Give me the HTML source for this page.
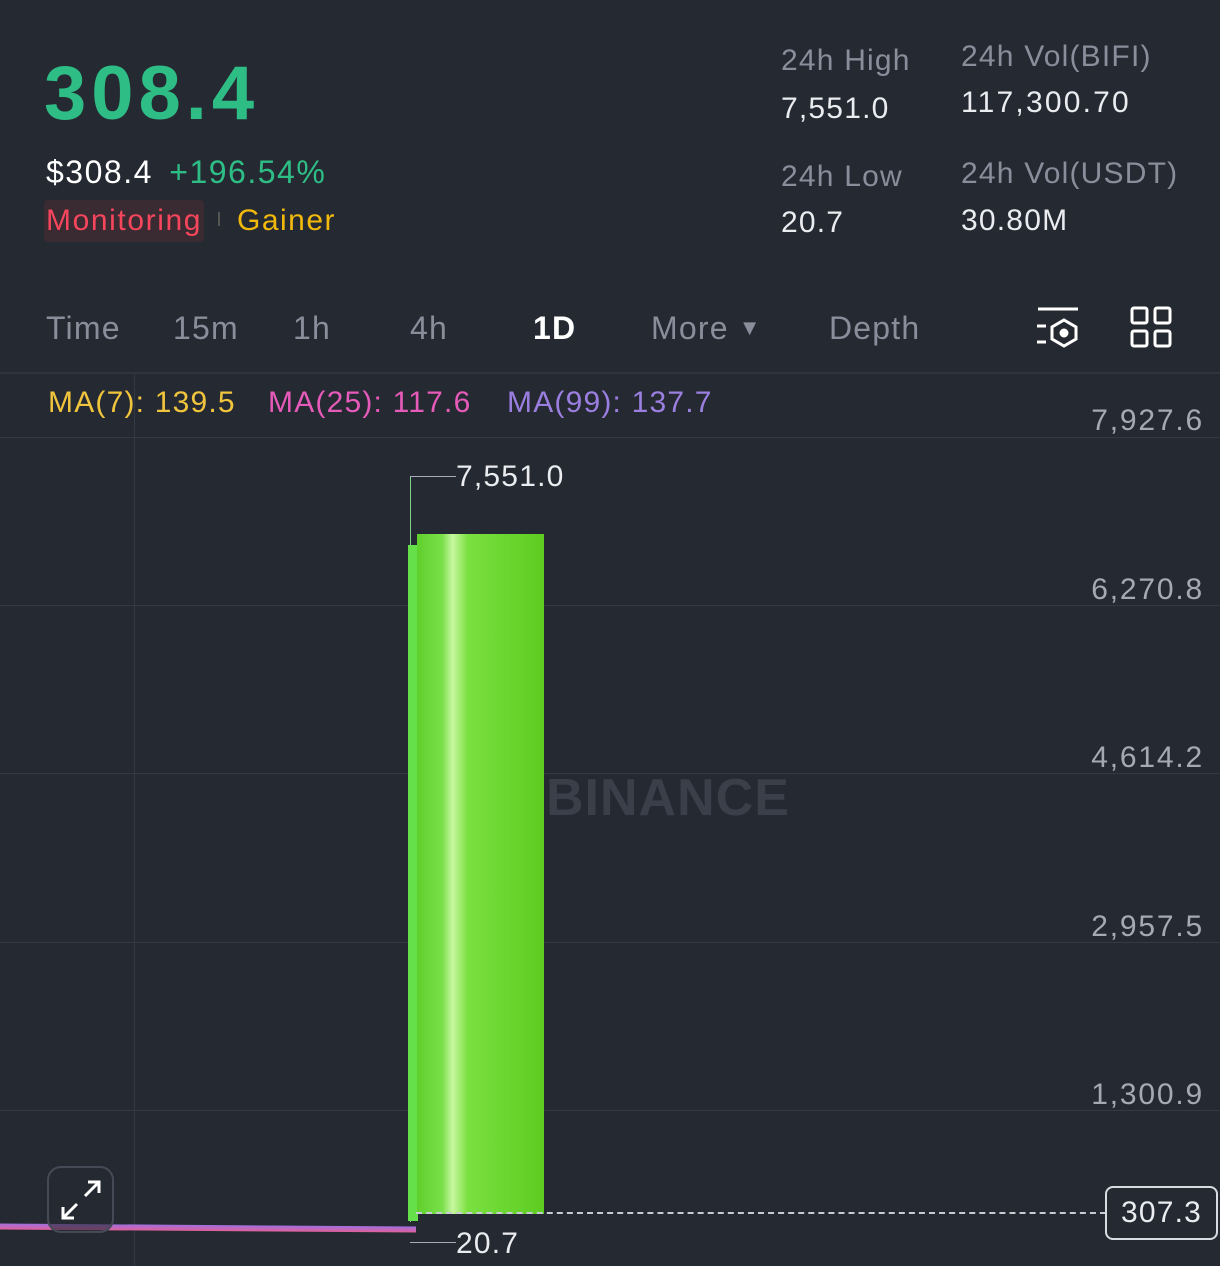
<!DOCTYPE html>
<html><head><meta charset="utf-8"><style>
*{margin:0;padding:0;box-sizing:border-box}
body{width:1220px;height:1266px;background:#252932;font-family:"Liberation Sans",sans-serif;position:relative;overflow:hidden;color:#eaecef;letter-spacing:1.2px}
.a{position:absolute;white-space:nowrap}
.g{color:#888f9b}
.hl{position:absolute;left:0;width:1220px;height:1px;background:#343a45}
.ax{position:absolute;right:16px;font-size:30px;color:#a4aab4;letter-spacing:1.8px}
</style></head><body>
<div class="a" style="left:44px;top:50px;font-size:76px;font-weight:bold;color:#2ebd85;letter-spacing:5px">308.4</div>
<div class="a" style="left:46px;top:154px;font-size:32px;color:#fff;letter-spacing:1.5px">$308.4 <span style="color:#2ebd85;margin-left:6px">+196.54%</span></div>
<div class="a" style="left:44px;top:200px;font-size:30px;color:#f6465d;background:#3a2a31;padding:4px 2px;border-radius:4px;letter-spacing:1.6px">Monitoring</div>
<div class="a" style="left:218px;top:212px;width:2px;height:14px;background:#555"></div>
<div class="a" style="left:237px;top:204px;font-size:30px;color:#f0b90b;letter-spacing:1.5px">Gainer</div>
<div class="a g" style="left:781px;top:44px;font-size:30px">24h High</div>
<div class="a" style="left:781px;top:92px;font-size:30px">7,551.0</div>
<div class="a g" style="left:781px;top:160px;font-size:30px">24h Low</div>
<div class="a" style="left:781px;top:206px;font-size:30px">20.7</div>
<div class="a g" style="left:961px;top:40px;font-size:30px">24h Vol(BIFI)</div>
<div class="a" style="left:961px;top:86px;font-size:30px;letter-spacing:2.2px">117,300.70</div>
<div class="a g" style="left:961px;top:157px;font-size:30px">24h Vol(USDT)</div>
<div class="a" style="left:961px;top:204px;font-size:30px">30.80M</div>
<div class="a g" style="left:46px;top:310px;font-size:32px">Time</div>
<div class="a g" style="left:173px;top:310px;font-size:32px">15m</div>
<div class="a g" style="left:293px;top:310px;font-size:32px">1h</div>
<div class="a g" style="left:410px;top:310px;font-size:32px">4h</div>
<div class="a" style="left:533px;top:310px;font-size:32px;color:#fff;font-weight:bold">1D</div>
<div class="a g" style="left:651px;top:310px;font-size:32px">More <span style="font-size:22px;position:relative;top:-4px">▼</span></div>
<div class="a g" style="left:829px;top:310px;font-size:32px">Depth</div>
<svg class="a" style="left:1034px;top:306px" width="48" height="44" viewBox="0 0 48 44" fill="none" stroke="#fff" stroke-width="3"><line x1="4" y1="3" x2="44" y2="3"/><line x1="3" y1="20" x2="12" y2="20"/><line x1="3" y1="36" x2="12" y2="36"/><path d="M30 14 L42 21 L42 33 L30 40 L18 33 L18 21 Z"/><circle cx="30" cy="27" r="3" fill="#fff"/></svg>
<svg class="a" style="left:1130px;top:306px" width="42" height="42" viewBox="0 0 42 42" fill="none" stroke="#fff" stroke-width="3"><rect x="2" y="2" width="15" height="15" rx="2"/><rect x="25" y="2" width="15" height="15" rx="2"/><rect x="2" y="25" width="15" height="15" rx="2"/><rect x="25" y="25" width="15" height="15" rx="2"/></svg>
<div class="hl" style="top:372px;height:2px;background:#2f343d"></div>
<div class="a" style="left:48px;top:386px;font-size:30px;color:#f0c43c">MA(7): 139.5</div>
<div class="a" style="left:268px;top:386px;font-size:30px;color:#e65ab9">MA(25): 117.6</div>
<div class="a" style="left:507px;top:386px;font-size:30px;color:#9b7fe0">MA(99): 137.7</div>
<div class="hl" style="top:437px"></div><div class="hl" style="top:605px"></div><div class="hl" style="top:773px"></div><div class="hl" style="top:942px"></div><div class="hl" style="top:1110px"></div>
<div class="a" style="left:134px;top:374px;width:1px;height:892px;background:#343a45"></div>
<div class="ax" style="top:404px">7,927.6</div>
<div class="ax" style="top:573px">6,270.8</div>
<div class="ax" style="top:741px">4,614.2</div>
<div class="ax" style="top:910px">2,957.5</div>
<div class="ax" style="top:1078px">1,300.9</div>
<div class="a" style="left:546px;top:768px;font-size:52px;font-weight:bold;color:#3a3f49;letter-spacing:1px">BINANCE</div>
<div class="a" style="left:410px;top:476px;width:1px;height:746px;background:#7fd08a"></div>
<div class="a" style="left:410px;top:476px;width:46px;height:1px;background:#aab"></div>
<div class="a" style="left:456px;top:460px;font-size:30px">7,551.0</div>
<div class="a" style="left:408px;top:545px;width:10px;height:676px;background:#66e04a"></div>
<div class="a" style="left:417px;top:534px;width:127px;height:680px;background:linear-gradient(90deg,#5fd02c 0%,#7ae04a 20%,#c8f7a0 28%,#7ae040 40%,#5dcc20 100%)"></div>
<div class="a" style="left:416px;top:1212px;width:690px;border-top:2px dashed #c8ccd2"></div>
<div class="a" style="left:1105px;top:1186px;width:113px;height:54px;border:2px solid #d8dce2;border-radius:8px;font-size:30px;text-align:center;line-height:50px;background:#252932">307.3</div>
<div class="a" style="left:410px;top:1242px;width:46px;height:1px;background:#aab"></div>
<div class="a" style="left:456px;top:1227px;font-size:30px">20.7</div>
<div class="a" style="left:0;top:1225px;width:416px;height:6px;background:linear-gradient(180deg,#a070e0,#e0609a);transform:skewY(0.4deg)"></div>
<div class="a" style="left:47px;top:1166px;width:67px;height:67px;border:2px solid #454b56;border-radius:14px;background:rgba(37,41,50,.6)"></div>
<svg class="a" style="left:58px;top:1177px" width="46" height="46" viewBox="0 0 46 46" fill="none" stroke="#fff" stroke-width="3"><path d="M27 19 L41 5 M30 5 H41 V16"/><path d="M19 27 L5 41 M5 30 V41 H16"/></svg>
</body></html>
